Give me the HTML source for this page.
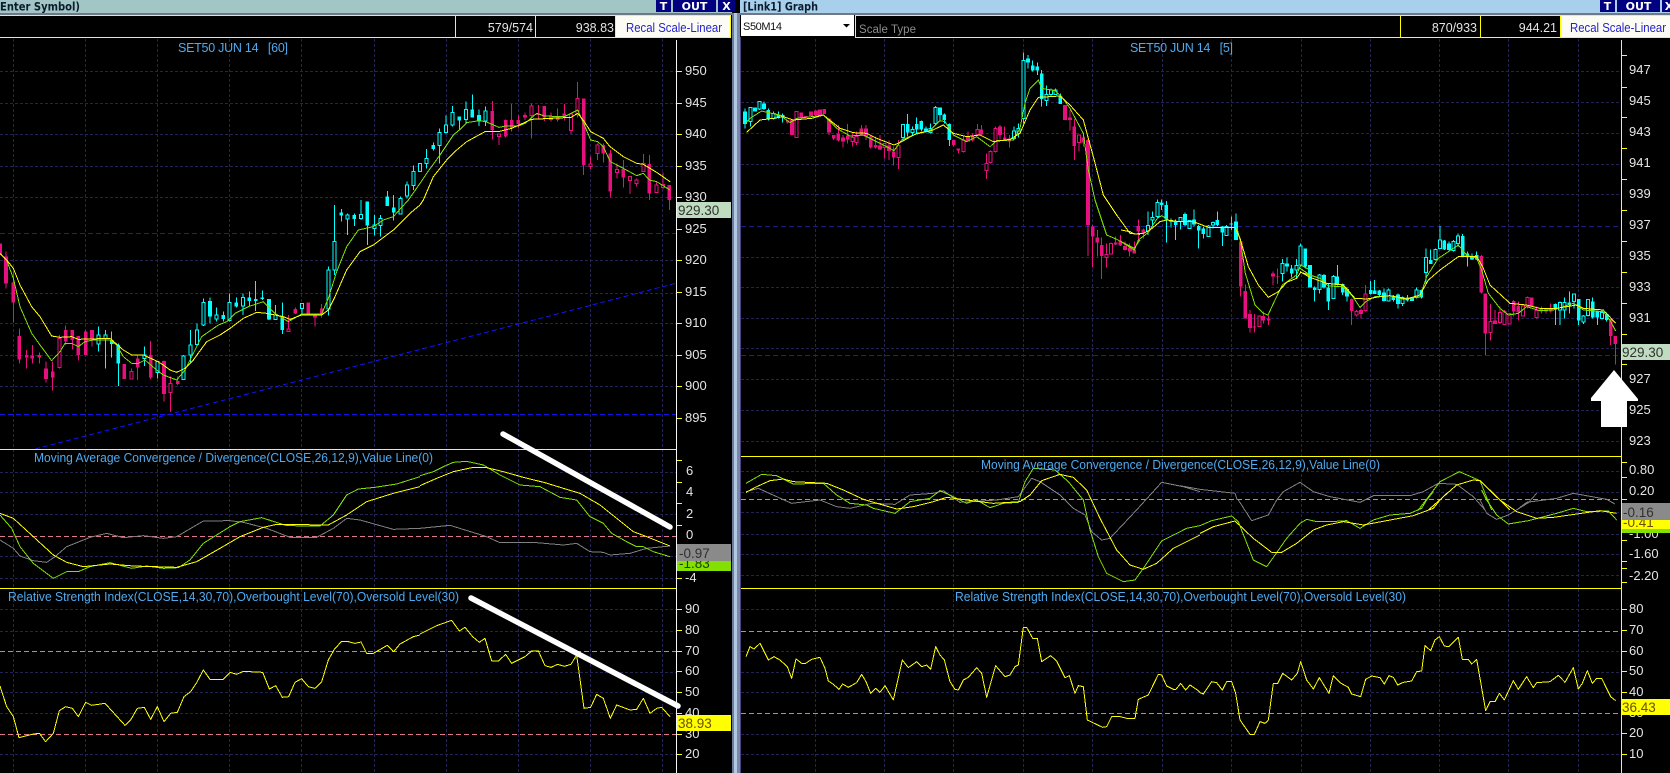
<!DOCTYPE html>
<html><head><meta charset="utf-8"><title>SET50 JUN 14</title>
<style>
html,body{margin:0;padding:0;background:#000;width:1670px;height:773px;overflow:hidden}
svg{display:block}
text{font-family:"Liberation Sans",Arial,sans-serif;font-size:12.5px;fill:#e4e4e4}
.t{fill:#50aaee;font-size:12.5px}
.b{font-family:"DejaVu Sans","Liberation Sans",sans-serif;font-weight:bold;font-size:11.5px;fill:#0c1c2c}
.o{font-family:"DejaVu Sans","Liberation Sans",sans-serif;font-weight:bold;font-size:11px;fill:#fff;text-anchor:middle}
.n{font-size:13px}
.r{fill:#2222cc;font-size:12.5px}
.d{fill:#303030;font-size:13.5px}
.y{fill:#6a5000;font-size:13.5px}
.grid{stroke:#242454;stroke-width:1;stroke-dasharray:3 2;fill:none;shape-rendering:crispEdges}
.pk{stroke:#e07890;stroke-width:1;stroke-dasharray:5 3;fill:none;shape-rendering:crispEdges}
.bl{stroke:#1414e8;stroke-width:1;stroke-dasharray:5 3;fill:none;shape-rendering:crispEdges}
.cw,.cb,.ch{stroke:#00ffff;fill:none;shape-rendering:crispEdges}
.pw,.pb,.ph{stroke:#e8107e;fill:none;shape-rendering:crispEdges}
.cw,.pw{stroke-width:3}
.cb,.pb{stroke-width:11}
.ch,.ph{stroke-width:3;fill:#000;transform:translate(1.5px,0)}
.lg,.ly,.lv{fill:none;stroke-width:3;stroke-linejoin:round;shape-rendering:crispEdges}
.lg{stroke:#80e000}.ly{stroke:#ffff00}.lv{stroke:#808080}
.ys{fill:none;stroke:#ffff00;stroke-width:1;shape-rendering:crispEdges}
.wt{stroke:#fff;stroke-width:5.5;stroke-linecap:round}
</style></head><body>
<svg xmlns="http://www.w3.org/2000/svg" width="1670" height="773" viewBox="0 0 1670 773">
<rect width="1670" height="773" fill="#000"/>
<!-- title bars -->
<rect x="0" y="0" width="732" height="13" fill="#a2c6c6"/>
<rect x="0" y="13" width="732" height="2" fill="#707888"/>
<rect x="740" y="0" width="930" height="13" fill="#a8cfec"/>
<rect x="740" y="13" width="930" height="2" fill="#707888"/>
<text class="b" x="0" y="10.500" textLength="80" lengthAdjust="spacingAndGlyphs">Enter Symbol)</text>
<text class="b" x="743" y="10.500" textLength="75" lengthAdjust="spacingAndGlyphs">[Link1] Graph</text>
<rect x="656" y="0" width="15" height="12" fill="#000080"/><rect x="673" y="0" width="43" height="12" fill="#000080"/><rect x="718" y="0" width="17" height="12" fill="#000080"/>
<text class="o" x="663.500" y="10">T</text><text class="o" x="694.500" y="10">OUT</text><text class="o" x="726.500" y="10">X</text>
<rect x="1600" y="0" width="15" height="12" fill="#000080"/><rect x="1617" y="0" width="43" height="12" fill="#000080"/><rect x="1662" y="0" width="8" height="12" fill="#000080"/>
<text class="o" x="1607.500" y="10">T</text><text class="o" x="1638.500" y="10">OUT</text><text class="o" x="1669" y="10">X</text>
<!-- divider -->
<rect x="732" y="13" width="2" height="760" fill="#6c7c9c"/><rect x="734" y="13" width="3" height="760" fill="#b0c8e0"/><rect x="737" y="13" width="3" height="760" fill="#7888a8"/><rect x="740" y="37" width="1" height="736" fill="#504080"/>
<!-- toolbars -->
<path class="ys" d="M0 15.500H730.500V37.500H0M455.500 15V37M535.500 15V37M615.500 15V37"/>
<rect x="616" y="16" width="114" height="21" fill="#fdfcf4"/>
<text class="r" x="626" y="32" textLength="96" lengthAdjust="spacingAndGlyphs">Recal Scale-Linear</text>
<text x="533" y="32" text-anchor="end">579/574</text>
<text x="614" y="32" text-anchor="end">938.83</text>
<rect x="741" y="15" width="113" height="21" fill="#fff"/>
<text x="743" y="30" style="fill:#111;font-size:11px" textLength="39" lengthAdjust="spacing">S50M14</text>
<path d="M843 24h7l-3.500 3.500z" fill="#000"/>
<path class="ys" d="M1670 15.500H855.500V37.500H1670M1400.500 15V37M1480.500 15V37M1560.500 15V37"/>
<rect x="1561" y="16" width="109" height="21" fill="#fdfcf4"/>
<text class="r" x="1570" y="32" textLength="96" lengthAdjust="spacingAndGlyphs">Recal Scale-Linear</text>
<text x="859" y="33" style="fill:#8c8c8c;font-size:11.5px" textLength="57" lengthAdjust="spacing">Scale Type</text>
<text x="1477" y="32" text-anchor="end">870/933</text>
<text x="1557" y="32" text-anchor="end">944.21</text>
<!-- left grid -->
<path class="grid" d="M13.500 39V773M85.500 39V773M157.500 39V773M229.500 39V773M301.500 39V773M374.500 39V773M446.500 39V773M518.500 39V773M590.500 39V773M662.500 39V773"/>
<path class="grid" d="M0 71.500H677M0 103.500H677M0 134.500H677M0 166.500H677M0 197.500H677M0 260.500H677M0 293.500H677M0 323.500H677M0 355.500H677M0 386.500H677M0 472.500H677M0 492.500H677M0 514.500H677M0 556.500H677M0 578.500H677M0 609.500H677M0 631.500H677M0 672.500H677M0 692.500H677M0 713.500H677M0 754.500H677"/>
<path class="pk" d="M0 536.500H677M0 651.500H677M0 734.500H677"/>
<path class="bl" d="M0 233.500H677M0 414.500H677M35 449L677 283"/>
<!-- right grid -->
<path class="grid" d="M815.500 39V773M884.500 39V773M953.500 39V773M1023.500 39V773M1092.500 39V773M1162.500 39V773M1231.500 39V773M1301.500 39V773M1370.500 39V773M1439.500 39V773M1508.500 39V773M1578.500 39V773"/>
<path class="grid" d="M741 71.500H1621M741 102.500H1621M741 133.500H1621M741 164.500H1621M741 194.500H1621M741 257.500H1621M741 287.500H1621M741 318.500H1621M741 348.500H1621M741 379.500H1621M741 410.500H1621M741 441.500H1621M741 471.500H1621M741 492.500H1621M741 512.500H1621M741 534.500H1621M741 554.500H1621M741 575.500H1621M741 609.500H1621M741 651.500H1621M741 672.500H1621M741 692.500H1621M741 734.500H1621M741 754.500H1621"/>
<path class="pk" d="M741 499.500H1621M741 631.500H1621M741 713.500H1621"/>
<path class="bl" style="stroke:#1c1c8a" d="M741 226.500H1621"/>
<path class="bl" d="M741 355.500H1621"/>

<!-- LEFT CANDLES part 1 -->
<g transform="translate(0 200) scale(.33333)">
<path class="pw" d="M18 155V265M40 215V368M58 385V490M80 450V505M97 435V490M118 458V490M138 485V548M158 485V572M178 405V505M197 377V435M217 390V448M235 408V482M257 390V465M276 390V440M395 505V537M413 465V540M452 423V537M492 482V605M512 530V636M533 530V555M866 345V395M886 322V342M945 340V380M965 312V352"/>
<path class="pb" d="M0 130V165M18 170V250M40 248V308M58 408V478M80 465V472M97 466V476M118 465V472M138 505V537M158 515V532M197 390V425M217 390V420M235 408V465M257 395V465M276 390V415M373 492V537M413 475V503M452 465V533M492 483V582M533 543V552M886 327V340M925 307V340M945 342V353M965 325V340"/>
<path class="ph" d="M172 415h9V503h-9zM389 515h9V537h-9zM506 550h9V577h-9zM860 387h9V395h-9z"/>
<path class="cw" d="M295 380V455M316 390V505M335 395V472M355 430V558M433 440V498M473 485V535M551 465V540M571 390V490M591 370V440M610 295V378M630 292V370M650 322V365M670 335V365M689 280V365M709 292V322M729 280V345M748 275V318M767 243V333M787 272V300M807 297V360M827 315V360M847 307V402M906 310V345M985 200V347M1004 15V225M1024 27V65M1042 40V105M1063 40V78M1083 0V60M1102 5V135M1123 45V107M1142 45V110M1162 -27V18M1181 -15V62M1201 -10V42M1221 -55V-5M1241 -103V-30"/>
<path class="cb" d="M335 420V432M355 435V490M630 303V350M670 345V357M709 308V320M748 293V303M767 297V303M787 293V297M807 297V358M847 350V390M1024 37V47M1063 45V57M1102 5V77M1162 -10V18M1181 22V38"/>
<path class="ch" d="M289 405h9V432h-9zM310 405h9V415h-9zM427 465h9V475h-9zM467 485h9V518h-9zM545 468h9V538h-9zM565 435h9V465h-9zM585 390h9V434h-9zM604 307h9V375h-9zM644 345h9V357h-9zM683 307h9V362h-9zM723 292h9V318h-9zM821 345h9V358h-9zM900 310h9V325h-9zM979 210h9V327h-9zM998 125h9V210h-9zM1036 45h9V57h-9zM1077 43h9V55h-9zM1117 75h9V85h-9zM1136 55h9V77h-9zM1195 -5h9V42h-9zM1215 -45h9V-12h-9zM1235 -85h9V-43h-9z"/>
</g>
<!-- LEFT CANDLES part 2 -->
<g transform="translate(420 0) scale(.33333)">
<path class="cw" d="M20 447V505M40 428V452M58 385V490M78 347V400M98 318V380M118 350V390M138 305V372M157 283V352M177 328V378M197 320V378"/>
<path class="cb" d="M40 435V447M118 350V362M157 328V352M177 345V363"/>
<path class="ch" d="M-6 490h9V515h-9zM14 475h9V490h-9zM52 398h9V437h-9zM72 375h9V397h-9zM92 337h9V375h-9zM132 328h9V358h-9zM191 333h9V363h-9z"/>
<path class="pw" d="M217 303V418M237 400V435M257 358V413M275 312V395M295 345V385M315 338V360M335 310V415M355 315V355M373 318V363M393 338V365M413 325V365M433 312V362M453 340V402M473 246V353M491 295V525M512 470V507M533 430V480M550 430V488M571 450V592M591 490V535M610 480V562M630 530V582M650 535V560M670 462V515M688 465V600M710 548V578M729 518V567M748 555V630"/>
<path class="pb" d="M217 333V390M257 360V410M275 360V385M295 360V372M315 345V353M355 340V345M373 318V353M393 350V360M413 348V360M433 340V348M491 295V495M550 435V460M571 460V575M610 507V532M688 492V580M748 555V600"/>
<path class="ph" d="M231 402h9V410h-9zM329 318h9V347h-9zM447 342h9V392h-9zM467 295h9V340h-9zM506 492h9V500h-9zM527 435h9V460h-9zM585 508h9V518h-9zM624 530h9V542h-9zM644 540h9V550h-9zM664 490h9V515h-9zM704 555h9V578h-9zM723 553h9V562h-9z"/>
<polyline class="lg" points="0,550 20,520 60,465 100,405 118,390 140,368 177,362 197,365 237,382 257,378 295,378 315,370 350,340 373,348 433,350 473,330 491,370 512,420 533,425 550,440 571,485 610,505 650,527 670,520 688,540 710,545 750,570"/>
<polyline class="ly" points="0,615 10,600 40,530 80,480 110,450 140,425 195,395 235,395 275,385 315,367 335,358 395,355 453,352 473,340 491,362 512,395 550,415 570,440 610,470 650,490 670,493 710,517 750,545"/>
</g>
<g transform="translate(0 200) scale(.33333)">
<polyline class="lg" points="0,160 20,180 40,235 60,320 95,400 120,435 155,482 180,455 195,430 215,430 235,440 255,425 280,420 330,420 350,435 370,470 395,490 415,490 435,480 470,510 490,525 530,540 555,510 580,460 605,410 655,375 680,365 705,340 745,320 790,305 825,340 865,365 905,342 965,342 985,295 1010,215 1040,140 1075,90 1120,80 1150,60 1180,50 1225,0 1260,-50"/>
<polyline class="ly" points="0,160 20,180 40,205 60,255 95,320 120,350 155,408 180,412 215,410 235,418 330,415 370,450 395,465 430,465 470,483 490,495 510,510 530,517 555,505 580,480 620,425 660,405 690,385 730,355 770,337 800,340 850,350 870,358 905,345 965,345 985,330 1005,290 1040,210 1080,155 1120,135 1180,90 1230,40 1260,15"/>
</g>
<!-- LEFT MACD / RSI -->
<g transform="translate(0 440) scale(.33333)">
<polyline class="lv" points="0,300 40,325 60,348 100,362 140,367 165,350 200,320 270,292 320,280 370,293 430,287 490,295 530,290 610,243 690,242 730,247 800,265 870,292 950,292 1000,265 1040,235 1080,240 1180,268 1260,265"/>
<polyline class="lg" points="0,225 35,265 60,320 100,370 160,415 200,395 235,395 270,380 330,368 395,385 440,378 490,385 535,383 570,360 610,310 690,260 720,245 785,233 860,257 960,258 1000,225 1040,165 1075,147 1125,142 1190,132 1260,110"/>
<polyline class="ly" points="0,220 40,235 100,290 160,345 200,367 250,380 330,372 400,378 530,382 590,365 660,325 720,290 790,262 830,253 985,255 1040,225 1100,185 1180,160 1260,140"/>
<polyline class="ly" points="0,738 20,800 40,830 57,893 100,882 118,880 137,905 160,880 178,812 197,800 217,805 235,830 257,787 275,796 315,790 375,856 393,838 412,805 433,802 452,838 472,800 492,845 512,820 532,817 552,770 572,755 590,728 610,690 630,718 670,718 690,697 710,703 730,694 788,697 808,747 827,737 847,772 866,770 885,727 905,716 925,740 945,745 965,725 985,660 1003,628 1024,605 1045,605 1065,610 1083,606 1100,640 1120,640 1162,616 1181,635 1200,612 1240,590 1260,585"/>
</g>
<g transform="translate(420 420) scale(.33333)">
<polyline class="lv" points="0,325 90,316 200,350 240,368 350,368 430,375 470,370 510,395 550,397 570,405 630,400 680,385 750,378"/>
<polyline class="lg" points="0,167 40,155 70,140 100,127 140,124 190,135 240,165 300,195 360,200 420,232 470,240 510,290 550,310 575,340 620,365 650,380 670,380 700,395 750,410"/>
<polyline class="ly" points="0,197 50,175 100,155 160,142 200,143 250,155 310,172 375,188 430,205 480,220 540,255 590,295 640,335 680,350 750,378"/>
<polyline class="ly" points="0,642 50,617 95,601 118,633 135,622 158,650 178,667 195,655 215,723 235,723 257,703 275,730 315,710 335,693 355,693 375,737 393,742 413,733 433,739 453,733 470,705 492,865 512,862 530,823 550,835 571,895 590,855 630,870 650,868 670,835 690,880 710,865 725,862 750,890"/>
</g>

<!-- RIGHT CANDLES part 1 -->
<g transform="translate(740 0) scale(.33333)">
<path class="cw" d="M15 325V385M32 322V380M58 303V330M72 305V330M85 325V362M100 335V358M115 335V355M128 340V368M489 372V425M503 342V410M517 380V405M530 352V400M544 362V395M558 380V398M572 370V400M587 318V375M600 322V365M613 340V370M628 370V438M822 380V420M836 370V412M850 157V370M864 165V205M878 182V215M892 188V225M905 210V320M920 257V318M933 265V290M947 265V285M961 280V312"/>
<path class="cb" d="M15 335V372M45 322V335M72 310V327M85 330V355M115 343V353M128 345V352M503 372V398M530 372V388M544 363V388M558 385V395M600 322V345M613 343V360M628 372V420M864 175V187M878 197V212M892 200V212M905 220V297M961 290V312"/>
<path class="ch" d="M26 322h9V365h-9zM52 305h9V327h-9zM94 340h9V355h-9zM483 373h9V412h-9zM511 388h9V398h-9zM566 385h9V398h-9zM581 322h9V370h-9zM816 393h9V415h-9zM830 385h9V400h-9zM844 182h9V355h-9zM914 283h9V302h-9zM927 270h9V283h-9zM941 270h9V283h-9z"/>
<path class="pw" d="M143 360V370M267 355V405M281 405V420M295 375V425M309 405V443M323 372V430M337 400V440M350 395V435M364 375V400M378 375V420M392 405V445M407 410V445M420 405V450M434 430V475M447 422V480M461 440V497M475 420V507M641 420V440M655 445V460M670 410V457M684 395V425M698 400V425M712 372V408M724 375V405M740 460V537M752 452V490M767 380V458M780 375V418M794 380V420M808 405V443M990 330V392M1003 357V480M1017 405V455M1030 405V440M1044 415V768M1058 675V802M1072 690V770M1085 712V837M1100 730V803M1113 728V763M1127 710V735M1141 705V738M1155 725V752M1169 730V770M1183 745V760"/>
<path class="pb" d="M143 362V368M156 360V405M184 338V352M197 348V352M213 335V348M228 332V345M240 328V345M253 327V342M267 355V397M281 405V415M295 400V422M309 412V425M323 407V418M364 385V408M378 385V410M392 410V443M407 435V443M420 437V448M447 437V453M461 455V472M641 420V435M655 445V452M684 410V425M698 410V422M724 388V403M780 380V405M794 412V418M808 415V425M975 315V360M990 352V360M1003 380V438M1030 412V428M1044 420V675M1058 680V710M1072 712V728M1085 735V768M1127 727V733M1141 722V737M1155 738V750M1169 745V755M1183 748V758"/>
<path class="ph" d="M164 335h9V412h-9zM331 412h9V425h-9zM344 410h9V428h-9zM428 430h9V442h-9zM469 437h9V472h-9zM664 420h9V455h-9zM706 388h9V403h-9zM734 490h9V512h-9zM746 455h9V488h-9zM761 385h9V455h-9zM1011 405h9V428h-9zM1094 763h9V773h-9zM1107 730h9V762h-9z"/>
</g>
<!-- RIGHT CANDLES part 2 -->
<g transform="translate(1130 170) scale(.33333)">
<path class="pw" d="M13 215V250M25 148V215M40 175V205M332 210V380M346 343V445M360 420V488M373 432V488M388 438V470M400 425V460M416 437V465M429 305V345M443 295V342"/>
<path class="pb" d="M0 232V245M13 240V250M25 168V185M40 178V190M332 215V350M346 363V445M360 432V474M373 470V473M400 438V452M416 445V452M429 310V320M443 318V320"/>
<path class="ph" d="M382 438h9V470h-9z"/>
<path class="cw" d="M54 125V195M68 125V168M82 88V145M95 88V120M109 93V218M123 145V172M137 148V210M151 142V178M165 128V168M178 150V175M192 118V170M206 165V235M220 170V205M235 165V200M249 155V175M262 124V168M277 168V228M290 165V197M304 140V180M318 130V210M457 267V335M471 262V305M485 285V322M499 267V325M512 220V290M526 235V295"/>
<path class="cb" d="M95 97V105M109 105V148M123 150V155M137 155V165M165 132V165M192 148V163M206 168V182M220 175V192M262 150V165M277 170V188M304 161V164M318 155V210M471 280V290M485 295V310M526 235V290"/>
<path class="ch" d="M48 167h9V183h-9zM62 142h9V150h-9zM76 97h9V140h-9zM145 142h9V155h-9zM172 152h9V175h-9zM229 168h9V200h-9zM243 157h9V165h-9zM284 170h9V197h-9zM451 280h9V310h-9zM493 287h9V300h-9zM506 228h9V285h-9z"/>
</g>
<!-- RIGHT CANDLES part 3 -->
<g transform="translate(1300 200) scale(.33333)">
<path class="cw" d="M30 195V252M44 260V305M58 222V280M72 222V265M85 250V330M100 225V280M112 195V257M128 250V285M141 262V305M212 243V283M224 240V280M238 270V290M252 265V305M266 265V305M280 285V305M294 280V325M308 290V318M322 285V305M350 262V295M364 268V295M378 145V250M392 148V192M406 145V182M420 78V145M433 120V150M447 125V152M460 120V155M474 100V140M488 102V165M502 155V200M516 160V180M530 155V180M766 310V375M780 305V375M794 292V355M808 275V340M822 280V325M836 297V375M850 345V372M864 298V350M878 293V355M892 335V375M906 330V358M920 338V365"/>
<path class="cb" d="M30 195V262M44 262V270M72 225V262M85 262V305M112 230V255M128 252V278M141 267V290M212 270V282M224 272V282M238 272V285M252 278V303M280 290V300M294 283V312M322 292V302M336 293V303M364 270V293M392 180V192M433 122V148M447 130V150M488 108V168M502 160V168M516 168V178M530 165V178M766 312V325M808 308V316M836 297V362M878 305V352M892 335V352M920 342V360"/>
<path class="ch" d="M52 225h9V268h-9zM94 230h9V295h-9zM260 270h9V303h-9zM302 292h9V310h-9zM344 270h9V292h-9zM372 172h9V218h-9zM400 148h9V178h-9zM414 120h9V145h-9zM454 125h9V152h-9zM468 108h9V130h-9zM774 308h9V330h-9zM788 308h9V330h-9zM816 282h9V305h-9zM844 348h9V366h-9zM858 298h9V347h-9zM900 338h9V355h-9z"/>
<path class="pw" d="M155 295V375M170 330V350M183 325V355M197 255V335M544 165V280M556 280V465M572 312V422M585 330V372M600 320V372M614 330V375M641 300V350M655 305V362M669 315V350M683 290V325M710 320V355M724 320V340M738 325V340M752 310V338M932 355V435M946 408V493"/>
<path class="pb" d="M155 297V333M183 330V342M544 168V278M556 280V400M585 362V372M641 303V335M655 318V338M695 292V320M724 325V335M738 326V335M752 326V335M932 355V408M946 408V432"/>
<path class="ph" d="M164 335h9V345h-9zM191 282h9V332h-9zM566 365h9V398h-9zM594 338h9V368h-9zM608 335h9V373h-9zM622 340h9V372h-9zM663 318h9V348h-9zM677 292h9V320h-9zM704 332h9V353h-9z"/>
</g>
<!-- RIGHT LINES -->
<g transform="translate(740 0) scale(.33333)">
<polyline class="lg" points="15,370 30,355 65,333 85,338 120,345 150,368 170,355 215,350 250,345 290,385 330,408 370,405 440,440 462,452 485,420 520,405 570,392 600,362 615,365 640,405 680,425 710,410 750,440 770,422 820,420 840,385 855,310 870,265 895,240 905,265 945,272 965,290 990,325 1030,400 1045,510 1065,600 1100,705 1130,718 1183,745 1200,720"/>
<polyline class="ly" points="20,397 60,360 100,355 130,350 160,360 215,355 250,345 300,385 340,398 380,400 410,415 462,435 485,425 530,400 575,392 610,375 640,400 680,410 720,405 760,425 810,418 840,400 870,330 895,292 930,290 960,288 990,315 1030,360 1060,470 1090,585 1130,645 1170,700 1200,703"/>
</g>
<g transform="translate(1130 170) scale(.33333)">
<polyline class="lg" points="-27,215 0,232 13,240 25,210 54,188 82,145 95,137 123,155 190,155 235,172 320,172 332,215 346,310 375,405 400,430 414,435 435,390 457,345 500,315 512,285 540,300"/>
<polyline class="ly" points="-27,180 0,185 13,192 40,190 60,180 90,155 110,150 150,155 190,155 235,172 315,172 330,205 355,290 385,345 415,382 445,365 470,337 500,325 512,307 540,315"/>
</g>
<g transform="translate(1300 200) scale(.33333)">
<polyline class="lg" points="0,205 30,225 60,235 85,258 130,260 155,285 180,322 197,305 225,290 270,287 310,298 360,290 380,230 415,175 475,135 500,165 530,175 545,210 565,280 600,325 625,345 655,340 680,320 720,332 760,330 820,310 850,330 910,335 930,360 947,393"/>
<polyline class="ly" points="0,215 30,232 80,250 130,255 165,295 200,297 240,290 270,287 320,297 360,285 385,240 420,210 475,170 530,170 548,200 570,255 630,310 680,315 720,325 770,325 830,315 850,325 910,330 947,370"/>
</g>
<g transform="translate(740 440) scale(.33333)">
<polyline class="lv" points="18,155 55,145 110,170 155,190 240,180 290,200 330,205 395,190 465,193 510,165 580,160 610,152 660,187 770,180 835,170 875,115 900,125 960,165 1000,205 1035,225 1055,275 1085,300 1110,295 1185,215 1265,127 1330,140 1380,155"/>
<polyline class="lg" points="18,130 65,103 110,107 160,132 250,130 290,165 330,190 380,195 400,205 465,220 510,185 570,175 600,152 640,170 680,190 710,180 750,203 790,190 835,187 855,125 880,85 945,90 985,125 1030,180 1050,270 1075,350 1100,400 1150,425 1185,420 1210,385 1265,303 1340,265 1380,257"/>
<polyline class="ly" points="18,157 50,140 90,122 130,117 160,125 260,130 310,150 370,178 470,207 520,200 580,185 620,172 680,180 760,190 840,185 870,165 905,122 960,103 1000,112 1040,150 1080,235 1130,330 1170,375 1210,388 1250,370 1300,325 1380,285"/>
<polyline class="ly" points="18,650 30,620 42,627 60,610 85,660 102,650 120,660 142,680 155,715 168,657 185,670 197,670 215,658 240,652 255,685 265,723 280,733 297,748 308,732 325,742 350,728 365,703 378,725 392,760 407,745 420,757 435,737 460,780 487,660 505,683 530,665 545,680 560,675 572,688 587,620 600,645 613,660 630,725 645,748 655,750 670,720 685,712 710,683 725,700 740,772 767,677 795,710 810,705 825,680 835,675 850,562 860,562 878,595 892,595 905,665 932,647 950,663 975,713 988,707 1005,760 1015,737 1030,740 1042,840 1088,862 1100,860 1115,830 1140,830 1160,835 1185,835 1195,778 1225,765 1255,703 1265,705 1280,738 1300,748 1308,748 1322,730 1337,750 1350,735 1375,752 1380,758"/>
</g>
<g transform="translate(1180 450) scale(.33333)">
<polyline class="lv" points="0,107 60,118 165,130 172,150"/>
<polyline class="lv" points="290,150 310,125 360,97 400,125 450,140 540,157 580,137 690,137 730,125 775,100 830,103 880,140 915,180"/>
<polyline class="lv" points="1010,180 1040,157 1130,145 1180,130 1280,148 1305,162"/>
<polyline class="lg" points="715,180 780,95 838,65 900,92 935,180"/>
<polyline class="ly" points="745,180 830,105 880,90 900,92 990,180"/>
</g>
<g transform="translate(1200 500) scale(.33333)">
<polyline class="lv" points="115,0 155,62 205,45 230,0"/>
<polyline class="lv" points="840,0 860,40 890,58 925,45 985,8 1010,-20"/>
<polyline class="lg" points="0,77 35,62 95,48 115,65 160,180 200,200 225,165 260,115 300,70 320,58 350,65 390,65 440,62 480,85 520,60 570,45 630,40 665,25 680,0 700,-25"/>
<polyline class="lg" points="845,-30 860,0 890,45 925,72 985,62 1070,40 1120,25 1160,35 1225,33 1250,60"/>
<polyline class="ly" points="0,100 40,80 105,63 160,115 215,157 245,157 290,130 340,90 380,75 430,65 490,75 560,62 640,47 700,25 720,0 740,-20"/>
<polyline class="ly" points="870,-30 900,0 950,35 1010,55 1060,52 1200,32 1250,40"/>
<polyline class="ly" points="0,578 10,582 35,545 50,548 67,570 80,545 95,545 107,580 120,660 150,703 163,703 180,665 195,670 205,660 220,550 233,550 248,520 275,540 292,520 302,485 320,540 340,567 358,533 387,580 400,527 420,548 445,562 455,582 482,590 497,538 515,528 540,533 553,552 567,527 580,532 593,555 610,547 635,543 650,515 665,513 675,437 692,452 705,420 718,410 733,438 747,440 775,412 787,478 805,478 815,492 830,478 857,632 870,605 885,605 898,580 913,600 940,542 955,568 980,530 1000,563 1010,548 1050,545 1075,526 1095,547 1120,503 1135,567 1147,550 1162,512 1177,550 1190,535 1205,535 1232,590 1247,602"/>
</g>

<!-- section lines and axes -->
<path class="ys" d="M0 449.500H677M0 588.500H677M741 456.500H1621M741 588.500H1621"/>
<path d="M676.500 40V773" stroke="#f4f4f4" stroke-width="1" shape-rendering="crispEdges"/>
<path class="ys" d="M1621.500 40V773"/>
<path class="ys" d="M677 71.500h5M677 103.500h5M677 134.500h5M677 166.500h5M677 197.500h5M677 229.500h5M677 260.500h5M677 292.500h5M677 323.500h5M677 355.500h5M677 386.500h5M677 418.500h5M677 460.500h5M677 482.500h5M677 503.500h5M677 525.500h5M677 578.500h5M677 609.500h5M677 630.500h5M677 651.500h5M677 671.500h5M677 692.500h5M677 713.500h5M677 734.500h5M677 754.500h5"/>
<path class="ys" d="M1622 55.500h5M1622 87.500h5M1622 117.500h5M1622 148.500h5M1622 179.500h5M1622 210.500h5M1622 241.500h5M1622 272.500h5M1622 303.500h5M1622 334.500h5M1622 364.500h5M1622 395.500h5M1622 426.500h5M1622 462.500h5M1622 477.500h5M1622 499.500h5M1622 540.500h5M1622 561.500h5M1622 568.500h5M1622 582.500h5M1622 609.500h5M1622 630.500h5M1622 651.500h5M1622 671.500h5M1622 692.500h5M1622 733.500h5M1622 754.500h5"/>

<!-- axis labels -->
<g>
<text class="n" x="685" y="75">950</text><text class="n" x="685" y="107">945</text><text class="n" x="685" y="138">940</text><text class="n" x="685" y="170">935</text><text class="n" x="685" y="201">930</text><text class="n" x="685" y="233">925</text><text class="n" x="685" y="264">920</text><text class="n" x="685" y="296">915</text><text class="n" x="685" y="327">910</text><text class="n" x="685" y="359">905</text><text class="n" x="685" y="390">900</text><text class="n" x="685" y="422">895</text>
<text class="n" x="686" y="475">6</text><text class="n" x="686" y="496">4</text><text class="n" x="686" y="518">2</text><text class="n" x="686" y="539">0</text><text class="n" x="685" y="582">-4</text>
<text class="n" x="685" y="613">90</text><text class="n" x="685" y="634">80</text><text class="n" x="685" y="655">70</text><text class="n" x="685" y="675">60</text><text class="n" x="685" y="696">50</text><text class="n" x="685" y="717">40</text><text class="n" x="685" y="738">30</text><text class="n" x="685" y="758">20</text>
<text class="n" x="1629" y="74">947</text><text class="n" x="1629" y="105">945</text><text class="n" x="1629" y="136">943</text><text class="n" x="1629" y="167">941</text><text class="n" x="1629" y="198">939</text><text class="n" x="1629" y="229">937</text><text class="n" x="1629" y="260">935</text><text class="n" x="1629" y="291">933</text><text class="n" x="1629" y="322">931</text><text class="n" x="1629" y="383">927</text><text class="n" x="1629" y="414">925</text><text class="n" x="1629" y="445">923</text>
<text class="n" x="1629" y="474">0.80</text><text class="n" x="1629" y="495">0.20</text><text class="n" x="1629" y="538">-1.00</text><text class="n" x="1629" y="558">-1.60</text><text class="n" x="1629" y="580">-2.20</text>
<text class="n" x="1629" y="613">80</text><text class="n" x="1629" y="634">70</text><text class="n" x="1629" y="655">60</text><text class="n" x="1629" y="675">50</text><text class="n" x="1629" y="696">40</text><text class="n" x="1629" y="717">30</text><text class="n" x="1629" y="737">20</text><text class="n" x="1629" y="758">10</text>
</g>

<!-- value boxes -->
<rect x="677" y="202" width="54" height="16" fill="#c0dcc0"/><text class="d" x="678" y="215">929.30</text>
<rect x="677" y="561" width="54" height="10" fill="#84e000"/><text class="d" x="679" y="568" style="fill:#204000">-1.83</text>
<rect x="677" y="544" width="54" height="17" fill="#8a8a8a"/><text class="d" x="679" y="558">-0.97</text>
<rect x="677" y="715" width="54" height="16" fill="#ffff00"/><text class="y" x="678" y="728">38.93</text>
<rect x="1622" y="344" width="48" height="16" fill="#c0dcc0"/><text class="d" x="1622" y="357">929.30</text>
<rect x="1622" y="529" width="48" height="4" fill="#84e000"/>
<rect x="1622" y="520" width="48" height="9" fill="#ffff00"/><text class="y" x="1623" y="527">-0.41</text>
<rect x="1622" y="503" width="48" height="17" fill="#8a8a8a"/><text class="d" x="1623" y="517">-0.16</text>
<rect x="1622" y="699" width="48" height="16" fill="#ffff00"/><text class="y" x="1622" y="712">36.43</text>

<!-- chart titles -->
<text class="t" x="178" y="52" textLength="110">SET50 JUN 14&#160;&#160;&#160;[60]</text>
<text class="t" x="1130" y="52" textLength="103">SET50 JUN 14&#160;&#160;&#160;[5]</text>
<text class="t" x="34" y="462" textLength="399" lengthAdjust="spacingAndGlyphs">Moving Average Convergence / Divergence(CLOSE,26,12,9),Value Line(0)</text>
<text class="t" x="8" y="601" textLength="451" lengthAdjust="spacingAndGlyphs">Relative Strength Index(CLOSE,14,30,70),Overbought Level(70),Oversold Level(30)</text>
<text class="t" x="981" y="469" textLength="399" lengthAdjust="spacingAndGlyphs">Moving Average Convergence / Divergence(CLOSE,26,12,9),Value Line(0)</text>
<text class="t" x="955" y="601" textLength="451" lengthAdjust="spacingAndGlyphs">Relative Strength Index(CLOSE,14,30,70),Overbought Level(70),Oversold Level(30)</text>

<!-- annotations -->
<path class="wt" d="M503 434L670 527M471 598L678 706"/>
<polygon points="1614,370 1638,399 1638,401 1627,401 1627,427 1601,427 1601,401 1591,401 1591,398" fill="#fff"/>
</svg>
</body></html>
